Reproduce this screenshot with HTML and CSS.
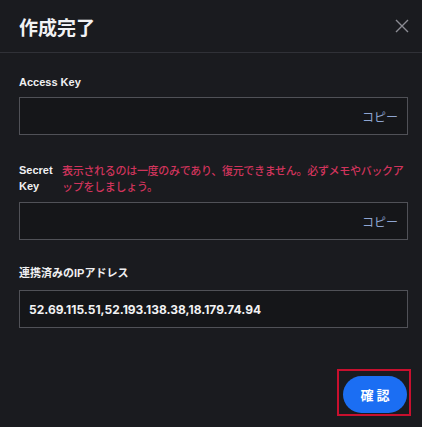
FILE: index.html
```html
<!DOCTYPE html>
<html lang="ja">
<head>
    <meta charset="UTF-8">
    <meta name="viewport" content="width=device-width, initial-scale=1.0">
    <title>作成完了</title>
    <link rel="stylesheet" href="styles.css">
</head>
<body>
    <div class="dialog">
        <div class="dialog-header">
            <h1 class="dialog-title">作成完了</h1>
            <button class="close-button" aria-label="閉じる">
                <svg width="14" height="14" viewBox="0 0 14 14">
                    <path d="M1 1 L13 13 M13 1 L1 13" stroke="#8b8c93" stroke-width="1.4" fill="none"/>
                </svg>
            </button>
        </div>
        <div class="dialog-body">
            <div class="field field-first">
                <div class="field-label">Access Key</div>
                <div class="field-box">
                    <span class="field-value"></span>
                    <button class="copy-button">コピー</button>
                </div>
            </div>

            <div class="field">
                <div class="secret-row">
                    <div class="field-label secret-label">Secret Key</div>
                    <div class="warning">表示されるのは一度のみであり、復元できません。必ずメモやバックアップをしましょう。</div>
                </div>
                <div class="field-box">
                    <span class="field-value"></span>
                    <button class="copy-button">コピー</button>
                </div>
            </div>

            <div class="field">
                <div class="field-label">連携済みのIPアドレス</div>
                <div class="field-box ip-box">
                    <span class="field-value">52.69.115.51,52.193.138.38,18.179.74.94</span>
                </div>
            </div>

            <div class="dialog-footer">
                <div class="focus-ring">
                    <button class="confirm-button">確 認</button>
                </div>
            </div>
        </div>
    </div>
</body>
</html>
```

FILE: styles.css
```css
/* styles.css */
body {
    margin: 0;
    background-color: #1a1b1f;
    color: #ffffff;
    font-family: "Liberation Sans", "Noto Sans CJK JP", sans-serif;
}

.dialog {
    width: 422px;
    height: 427px;
}

.dialog-header {
    display: flex;
    justify-content: space-between;
    align-items: center;
    height: 52px;
    padding: 0 13px 0 19px;
    border-bottom: 1px solid #303137;
}

.dialog-title {
    margin: 0;
    font-size: 19px;
    font-weight: bold;
    font-family: "Noto Sans CJK JP", sans-serif;
    color: #f2f2f4;
}

.close-button {
    background: none;
    border: none;
    padding: 0;
    width: 14px;
    height: 14px;
    cursor: pointer;
}

.dialog-body {
    padding: 0 14px 0 19px;
}

.field {
    margin-top: 27px;
}

.field-first {
    margin-top: 23px;
}

.field-label {
    font-size: 11px;
    font-weight: bold;
    line-height: 13px;
    color: #f0f0f2;
    margin-bottom: 8px;
}

.secret-row {
    display: flex;
    gap: 10px;
    margin-bottom: 8px;
}

.secret-label {
    width: 33px;
    line-height: 16px;
    margin-bottom: 0;
}

.warning {
    flex: 1;
    font-size: 11px;
    font-weight: 500;
    line-height: 16px;
    letter-spacing: -0.3px;
    line-break: loose;
    font-family: "Noto Sans CJK JP", sans-serif;
    color: #d1345c;
}

.field-box {
    display: flex;
    align-items: center;
    justify-content: space-between;
    height: 36px;
    border: 1px solid #505157;
    background-color: #151619;
    padding: 0 9px 0 9px;
}

.field-value {
    font-size: 12px;
    font-weight: bold;
    color: #f2f2f4;
    font-family: "Inter", "Liberation Sans", sans-serif;
}

.ip-box {
    margin-top: 10px;
}

.copy-button {
    background: none;
    border: none;
    padding: 0;
    font-size: 12px;
    font-family: "Noto Sans CJK JP", sans-serif;
    color: #8ea5d2;
    cursor: pointer;
}

.dialog-footer {
    display: flex;
    justify-content: flex-end;
    margin-top: 41px;
    margin-right: -3px;
}

.focus-ring {
    border: 2px solid #c8102e;
    padding: 5px 2px 1px 4px;
}

.confirm-button {
    width: 64px;
    height: 37px;
    border: none;
    border-radius: 19px;
    background-color: #1b6ef3;
    color: #ffffff;
    font-size: 13px;
    font-weight: bold;
    font-family: "Noto Sans CJK JP", sans-serif;
    cursor: pointer;
}
```
